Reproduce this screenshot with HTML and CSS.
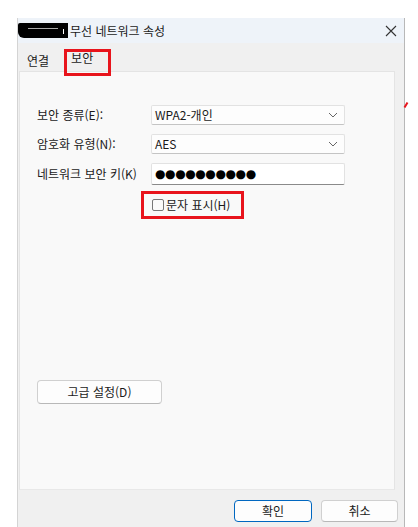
FILE: index.html
```html
<!DOCTYPE html>
<html lang="ko">
<head>
<meta charset="utf-8">
<link rel="stylesheet" href="styles.css">
</head>
<body>
<div class="window">
  <div class="titlebar">
    <div class="redact"><span class="redact-line"></span><span class="redact-dot"></span></div>
    <span class="title">무선 네트워크 속성</span>
    <svg class="close" width="12" height="12" viewBox="0 0 12 12"><path d="M1 1 L11 11 M11 1 L1 11" stroke="#333" stroke-width="1.1" fill="none"/></svg>
  </div>
  <div class="tabs">
    <span class="tab">연결</span>
    <span class="tab active">보안</span>
    <span class="mark-tab"></span>
  </div>
  <div class="panel">
    <div class="form">
      <div class="row">
        <span class="label">보안 종류(E):</span>
        <div class="combo"><span>WPA2-개인</span><svg width="10" height="6" viewBox="0 0 10 6"><path d="M1 1 L5 5 L9 1" stroke="#666" stroke-width="1" fill="none"/></svg></div>
      </div>
      <div class="row">
        <span class="label">암호화 유형(N):</span>
        <div class="combo"><span>AES</span><svg width="10" height="6" viewBox="0 0 10 6"><path d="M1 1 L5 5 L9 1" stroke="#666" stroke-width="1" fill="none"/></svg></div>
      </div>
      <div class="row">
        <span class="label">네트워크 보안 키(K)</span>
        <div class="input"><span class="dots">●●●●●●●●●●</span></div>
      </div>
    </div>
    <div class="check-wrap">
      <span class="check-mark">
        <span class="checkbox"></span>
        <span class="check-label">문자 표시(H)</span>
      </span>
    </div>
    <div class="spacer"></div>
    <button class="btn adv">고급 설정(D)</button>
  </div>
  <div class="footer">
    <button class="btn ok">확인</button>
    <button class="btn">취소</button>
  </div>
</div>
<span class="side-mark"></span>
</body>
</html>
```
FILE: styles.css
```css
html, body {
  margin: 0;
  padding: 0;
  background: #ffffff;
  width: 418px;
  height: 527px;
  overflow: hidden;
  font-family: "Noto Sans CJK KR", "Noto Sans", sans-serif;
  font-size: 12px;
  color: #1a1a1a;
}
body { position: relative; }
.window {
  margin: 18px 0 0 17px;
  width: 386px;
  height: 509px;
  background: #f0f0f0;
  border-left: 1px solid #d4d4d4;
  border-right: 1px solid #b8b8b8;
  display: flex;
  flex-direction: column;
  position: relative;
}
.titlebar {
  height: 25px;
  background: #eef3f9;
  display: flex;
  align-items: center;
  position: relative;
}
.redact {
  width: 50px;
  height: 15px;
  background: #000;
  border-radius: 2px 0 0 6px;
  position: relative;
}
.redact-line {
  position: absolute;
  left: 10px;
  top: 5px;
  width: 30px;
  height: 1px;
  background: #aaa;
}
.redact-dot {
  position: absolute;
  right: 4px;
  top: 6px;
  width: 1px;
  height: 5px;
  background: #fff;
}
.title {
  margin-left: 2px;
  font-size: 12px;
  color: #1a1a1a;
}
.close {
  margin-left: auto;
  margin-right: 7px;
}
.tabs {
  height: 28px;
  display: flex;
  align-items: flex-end;
  position: relative;
}
.tab {
  font-size: 12px;
  line-height: 16px;
  padding-bottom: 2px;
}
.tab:first-child { margin-left: 9px; }
.tab.active {
  margin-left: 22px;
  padding-bottom: 5px;
}
.mark-tab {
  position: absolute;
  left: 46px;
  top: 6px;
  width: 41px;
  height: 21px;
  border: 3px solid #e8141c;
  z-index: 2;
}
.panel {
  margin-left: 1px;
  width: 376px;
  height: 419px;
  background: #f9f9f9;
  border: 1px solid #e4e4e4;
  border-bottom-color: #e8e8e8;
  display: flex;
  flex-direction: column;
  padding: 33px 0 0 17px;
  box-sizing: border-box;
}
.form {
  display: flex;
  flex-direction: column;
  gap: 9px;
}
.row {
  display: flex;
  align-items: center;
}
.label {
  width: 114px;
  flex: none;
  font-size: 12px;
  line-height: 16px;
  color: #1a1a1a;
}
.combo, .input {
  width: 194px;
  height: 20px;
  box-sizing: border-box;
  background: #fdfdfd;
  border: 1px solid #e2e2e2;
  border-bottom-color: #c4c4c4;
  border-radius: 2px;
  display: flex;
  align-items: center;
  justify-content: space-between;
  padding: 0 6px 0 3px;
  font-size: 12px;
  line-height: 16px;
}
.input {
  height: 22px;
  background: #ffffff;
  border-bottom: 1px solid #8a8a8a;
}
.dots {
  font-family: "DejaVu Sans", sans-serif;
  font-size: 12px;
  letter-spacing: -0.4px;
  color: #000;
}
.check-wrap {
  display: flex;
  margin: 6px 0 0 104px;
}
.check-mark {
  display: flex;
  align-items: center;
  gap: 2px;
  border: 3px solid #e8141c;
  height: 22px;
  width: 89px;
  padding-left: 8px;
  line-height: 16px;
}
.checkbox {
  width: 10px;
  height: 10px;
  border: 1px solid #777;
  border-radius: 2px;
  background: #fbfbfb;
}
.check-label { font-size: 12px; }
.spacer { height: 161px; }
.btn {
  font-family: "Noto Sans CJK KR", "Noto Sans", sans-serif;
  font-size: 12px;
  color: #1a1a1a;
  background: #fdfdfd;
  border: 1px solid #d0d0d0;
  border-bottom-color: #b8b8b8;
  border-radius: 4px;
  padding: 0;
  line-height: 1;
}
.adv {
  width: 125px;
  height: 24px;
}
.footer {
  display: flex;
  justify-content: flex-end;
  gap: 9px;
  padding: 10px 6px 0 0;
}
.footer .btn {
  width: 77px;
  height: 22px;
}
.footer .ok {
  border: 1px solid #0067c0;
  width: 78px;
}
.side-mark {
  position: absolute;
  left: 405px;
  top: 102px;
  width: 2px;
  height: 6px;
  background: #e8141c;
  transform: rotate(30deg);
}
```
